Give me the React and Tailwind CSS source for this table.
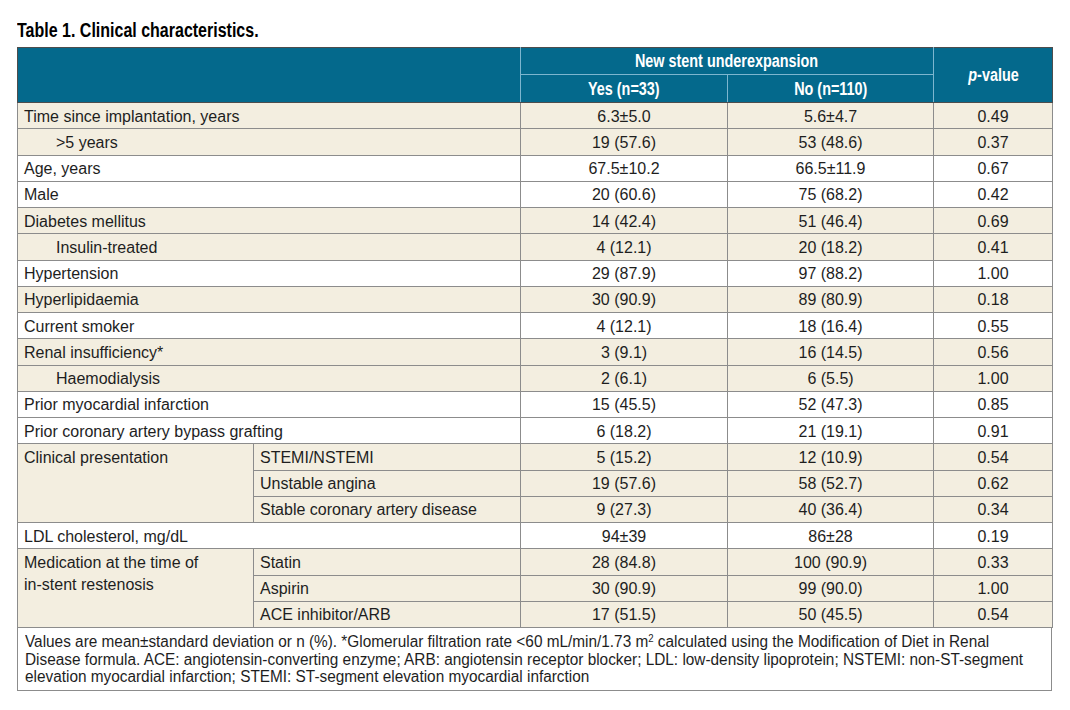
import React from 'react';

const rows = [
  { label: 'Time since implantation, years', yes: '6.3±5.0', no: '5.6±4.7', p: '0.49', bg: 'beige' },
  { label: '>5 years', yes: '19 (57.6)', no: '53 (48.6)', p: '0.37', bg: 'beige', indent: true },
  { label: 'Age, years', yes: '67.5±10.2', no: '66.5±11.9', p: '0.67', bg: 'white' },
  { label: 'Male', yes: '20 (60.6)', no: '75 (68.2)', p: '0.42', bg: 'white' },
  { label: 'Diabetes mellitus', yes: '14 (42.4)', no: '51 (46.4)', p: '0.69', bg: 'beige' },
  { label: 'Insulin-treated', yes: '4 (12.1)', no: '20 (18.2)', p: '0.41', bg: 'beige', indent: true },
  { label: 'Hypertension', yes: '29 (87.9)', no: '97 (88.2)', p: '1.00', bg: 'white' },
  { label: 'Hyperlipidaemia', yes: '30 (90.9)', no: '89 (80.9)', p: '0.18', bg: 'beige' },
  { label: 'Current smoker', yes: '4 (12.1)', no: '18 (16.4)', p: '0.55', bg: 'white' },
  { label: 'Renal insufficiency*', yes: '3 (9.1)', no: '16 (14.5)', p: '0.56', bg: 'beige' },
  { label: 'Haemodialysis', yes: '2 (6.1)', no: '6 (5.5)', p: '1.00', bg: 'beige', indent: true },
  { label: 'Prior myocardial infarction', yes: '15 (45.5)', no: '52 (47.3)', p: '0.85', bg: 'white' },
  { label: 'Prior coronary artery bypass grafting', yes: '6 (18.2)', no: '21 (19.1)', p: '0.91', bg: 'white' },
  {
    group: 'Clinical presentation',
    bg: 'beige',
    items: [
      { label: 'STEMI/NSTEMI', yes: '5 (15.2)', no: '12 (10.9)', p: '0.54' },
      { label: 'Unstable angina', yes: '19 (57.6)', no: '58 (52.7)', p: '0.62' },
      { label: 'Stable coronary artery disease', yes: '9 (27.3)', no: '40 (36.4)', p: '0.34' },
    ],
  },
  { label: 'LDL cholesterol, mg/dL', yes: '94±39', no: '86±28', p: '0.19', bg: 'white' },
  {
    group: 'Medication at the time of in-stent restenosis',
    bg: 'beige',
    items: [
      { label: 'Statin', yes: '28 (84.8)', no: '100 (90.9)', p: '0.33' },
      { label: 'Aspirin', yes: '30 (90.9)', no: '99 (90.0)', p: '1.00' },
      { label: 'ACE inhibitor/ARB', yes: '17 (51.5)', no: '50 (45.5)', p: '0.54' },
    ],
  },
];

const cell = 'border border-[#8c8c8c] h-[26.25px] p-0 pt-[2px] leading-[22px]';
const bgOf = (bg) => (bg === 'beige' ? 'bg-[#f3eee0]' : 'bg-white');

// the reference uses a condensed face, so squeeze the regular one
const Narrow = ({ children, className = '' }) => (
  <span className={`inline-block scale-x-[0.8] ${className}`}>{children}</span>
);

const ValueCells = ({ r }) => (
  <>
    <td className={`${cell} text-center`}>{r.yes}</td>
    <td className={`${cell} text-center`}>{r.no}</td>
    <td className={`${cell} text-center`}>{r.p}</td>
  </>
);

const App = () => {
  return (
    <div className="w-[1070px] h-[710px] overflow-hidden bg-white pt-[19px] pl-[17px] text-[#1e1e1e] font-['Liberation_Sans',Arial,sans-serif]">
      <h1 className="text-[20px] leading-[22px] font-bold text-black">
        <Narrow className="origin-left whitespace-nowrap">Table 1. Clinical characteristics.</Narrow>
      </h1>

      <table className="mt-[6px] w-[1035px] border-collapse table-fixed text-[16px]">
        <colgroup>
          <col className="w-[236px]" />
          <col className="w-[267px]" />
          <col className="w-[207px]" />
          <col className="w-[206px]" />
          <col className="w-[119px]" />
        </colgroup>
        <thead className="bg-[#04698c] text-white font-bold text-[18px]">
          <tr className="h-[27px]">
            <th colSpan={2} rowSpan={2} className="border border-[#4d4d4d] border-r-[#7db6cf] border-b-[#4d4d4d]"></th>
            <th colSpan={2} className="border border-[#4d4d4d] border-x-[#7db6cf] border-b-[#7db6cf] font-bold leading-[26px]">
              <Narrow className="whitespace-nowrap">New stent underexpansion</Narrow>
            </th>
            <th rowSpan={2} className="border border-[#4d4d4d] border-l-[#7db6cf] font-bold">
              <Narrow className="whitespace-nowrap">
                <i>p</i>-value
              </Narrow>
            </th>
          </tr>
          <tr className="h-[28px]">
            <th className="border border-[#4d4d4d] border-t-[#7db6cf] border-x-[#7db6cf] font-bold leading-[26px]">
              <Narrow className="whitespace-nowrap">Yes (n=33)</Narrow>
            </th>
            <th className="border border-[#4d4d4d] border-t-[#7db6cf] border-x-[#7db6cf] font-bold leading-[26px]">
              <Narrow className="whitespace-nowrap">No (n=110)</Narrow>
            </th>
          </tr>
        </thead>
        <tbody>
          {rows.map((r, i) =>
            r.group ? (
              r.items.map((it, j) => (
                <tr key={`${i}-${j}`} className={bgOf(r.bg)}>
                  {j === 0 && (
                    <td rowSpan={3} className={`${cell} align-top pl-[6px] pt-[3px]`}>
                      <div className="w-[190px] leading-[22px]">{r.group}</div>
                    </td>
                  )}
                  <td className={`${cell} pl-[6px]`}>{it.label}</td>
                  <ValueCells r={it} />
                </tr>
              ))
            ) : (
              <tr key={i} className={bgOf(r.bg)}>
                <td colSpan={2} className={`${cell} ${r.indent ? 'pl-[38px]' : 'pl-[6px]'}`}>
                  {r.label}
                </td>
                <ValueCells r={r} />
              </tr>
            )
          )}
        </tbody>
      </table>

      <div className="w-[1035px] overflow-hidden border border-t-0 border-[#8c8c8c] pl-[7px] pt-[5px] pb-[4px]">
        <div className="w-[1054px] origin-left scale-x-[0.96] text-[16px] leading-[17.5px]">
          Values are mean±standard deviation or n (%). *Glomerular filtration rate &lt;60 mL/min/1.73 m<span className="align-[5px] text-[10px] leading-none">2</span> calculated using the Modification of Diet in Renal Disease formula. ACE: angiotensin-converting enzyme; ARB: angiotensin receptor blocker; LDL: low-density lipoprotein; NSTEMI: non-ST-segment elevation myocardial infarction; STEMI: ST-segment elevation myocardial infarction
        </div>
      </div>
    </div>
  );
};

export default App;
